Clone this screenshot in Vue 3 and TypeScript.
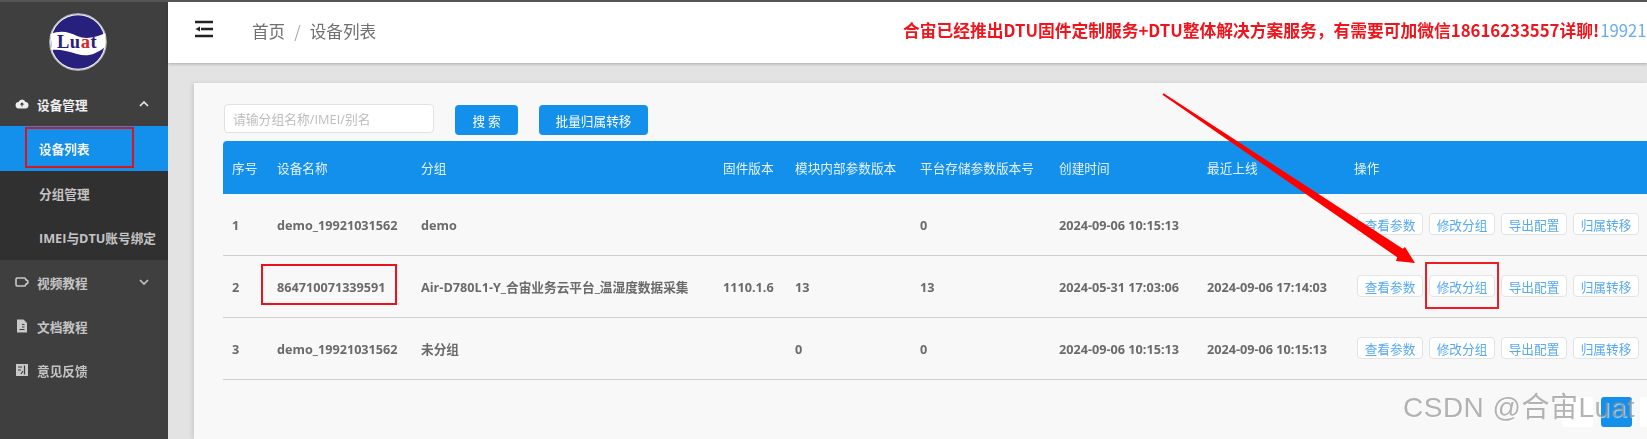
<script setup lang="ts">
interface Row {
  no: number
  name: string
  group: string
  firmware: string
  inner: string
  stored: string
  created: string
  online: string
}

const columns = ['序号', '设备名称', '分组', '固件版本', '模块内部参数版本', '平台存储参数版本号', '创建时间', '最近上线', '操作']
const actions = ['查看参数', '修改分组', '导出配置', '归属转移']

const rows: Row[] = [
  { no: 1, name: 'demo_19921031562', group: 'demo', firmware: '', inner: '', stored: '0', created: '2024-09-06 10:15:13', online: '' },
  { no: 2, name: '864710071339591', group: 'Air-D780L1-Y_合宙业务云平台_温湿度数据采集', firmware: '1110.1.6', inner: '13', stored: '13', created: '2024-05-31 17:03:06', online: '2024-09-06 17:14:03' },
  { no: 3, name: 'demo_19921031562', group: '未分组', firmware: '', inner: '0', stored: '0', created: '2024-09-06 10:15:13', online: '2024-09-06 10:15:13' }
]
</script>

<template>
  <div class="page">
    <aside class="sidebar">
      <div class="logo">
        <svg width="58" height="58" viewBox="0 0 58 58">
          <circle cx="29" cy="29" r="28.2" fill="#fff" stroke="#b9b9c4" stroke-width="1.2" />
          <circle cx="29" cy="29" r="26.8" fill="#27207c" />
          <path d="M1.5 21 C12 17 20 19 28 23 C38 27 47 24 56.5 20 L56 34 C46 42 38 44 28 41 C18 38 10 36 3 37 Z" fill="#fff" />
          <text x="8" y="35" class="logo-text">L<tspan fill="#27207c">u</tspan><tspan fill="#d9252b">a</tspan><tspan fill="#27207c">t</tspan></text>
        </svg>
      </div>
      <nav class="menu">
        <div class="menu-item bright">
          <svg class="icon" viewBox="0 0 14 14"><path d="M4 11.500a3.200 3.200 0 0 1-.4-6.400 3.600 3.600 0 0 1 6.900 0 3.200 3.200 0 0 1-.4 6.400Z" fill="#eee" /><path d="M7 6v3.400M5.500 7.600 7 6l1.500 1.600" stroke="#3d3d3d" stroke-width="1.100" fill="none" /></svg>
          <span>设备管理</span>
          <svg class="caret" viewBox="0 0 10 6"><path d="M1 5l4-4 4 4" fill="none" stroke="#eee" stroke-width="1.600" /></svg>
        </div>
        <div class="submenu">
          <div class="sub-item active"><span class="mark">设备列表</span></div>
          <div class="sub-item">分组管理</div>
          <div class="sub-item">IMEI与DTU账号绑定</div>
        </div>
        <div class="menu-item">
          <svg class="icon" viewBox="0 0 14 14"><path d="M2.200 3h7a1.500 1.500 0 0 1 1.500 1.500L12.800 6v2l-2.100 1.500A1.500 1.500 0 0 1 9.200 11h-7A1.200 1.200 0 0 1 1 9.800V4.200A1.200 1.200 0 0 1 2.200 3Z" fill="none" stroke="#c8c8c8" stroke-width="1.600" /></svg>
          <span>视频教程</span>
          <svg class="caret" viewBox="0 0 10 6"><path d="M1 1l4 4 4-4" fill="none" stroke="#c8c8c8" stroke-width="1.600" /></svg>
        </div>
        <div class="menu-item">
          <svg class="icon" viewBox="0 0 14 14"><path d="M2 .5h6.500l3.500 3.500v9.500H2Z" fill="#c8c8c8" /><path d="M7 5.500h2.500M7 8h2.500M4.500 10.500h5" stroke="#3d3d3d" stroke-width="1.100" /></svg>
          <span>文档教程</span>
        </div>
        <div class="menu-item">
          <svg class="icon" viewBox="0 0 14 14"><rect x="1" y="1" width="12" height="12" fill="#c8c8c8" /><path d="M9.500 2.500v9M3 4h4M3 7h3M6 11l2-3" stroke="#3d3d3d" stroke-width="1.200" /></svg>
          <span>意见反馈</span>
        </div>
      </nav>
    </aside>

    <main class="main">
      <header class="topbar">
        <svg class="fold" viewBox="0 0 20 18"><path d="M1 2h18M7 9h12M1 16h18" stroke="#222" stroke-width="2.400" /><path d="M1.500 9 6 6.500v5Z" fill="#222" /></svg>
        <div class="crumb"><span>首页</span><i>/</i><span>设备列表</span></div>
        <div class="notice">合宙已经推出DTU固件定制服务+DTU整体解决方案服务，有需要可加微信18616233557详聊!<span class="phone">19921</span></div>
      </header>

      <section class="content">
        <div class="card">
          <div class="toolbar">
            <input class="search" type="text" placeholder="请输分组名称/IMEI/别名" />
            <button class="btn">搜 索</button>
            <button class="btn wide">批量归属转移</button>
          </div>
          <table class="grid">
            <colgroup>
              <col class="c1" /><col class="c2" /><col class="c3" /><col class="c4" /><col class="c5" /><col class="c6" /><col class="c7" /><col class="c8" /><col />
            </colgroup>
            <thead>
              <tr><th v-for="col in columns" :key="col">{{ col }}</th></tr>
            </thead>
            <tbody>
              <tr v-for="row in rows" :key="row.no">
                <td>{{ row.no }}</td>
                <td>
                  <span :class="{ 'name-mark': row.no === 2 }">{{ row.name }}</span>
                </td>
                <td>{{ row.group }}</td>
                <td>{{ row.firmware }}</td>
                <td>{{ row.inner }}</td>
                <td>{{ row.stored }}</td>
                <td>{{ row.created }}</td>
                <td>{{ row.online }}</td>
                <td>
                  <div class="actions">
                    <button v-for="action in actions" :key="action" class="act" :class="{ marked: row.no === 2 && action === '修改分组' }">{{ action }}</button>
                  </div>
                </td>
              </tr>
            </tbody>
          </table>
          <div class="pager">
            <span class="pg"></span>
            <span class="pg current"></span>
            <span class="pg"></span>
          </div>
        </div>
      </section>
    </main>

    <!-- annotation drawn over the screenshot -->
    <svg class="arrow" width="1647" height="439" viewBox="0 0 1647 439">
      <path d="M1162.400 94.800 L1163.600 93.200 L1402.800 248.800 L1405 247 L1415 263 L1396 261 L1397.200 257.200 Z" fill="#f00" />
    </svg>
    <div class="watermark">CSDN @合宙Luat</div>
  </div>
</template>

<style>
html,
body {
  margin: 0;
  overflow: hidden;
}
</style>

<style scoped>
.page {
  position: relative;
  display: flex;
  width: 1647px;
  height: 439px;
  overflow: hidden;
  font-family: "Open Sans", "Noto Sans CJK SC", sans-serif;
  border-top: 2px solid #555;
  box-sizing: border-box;
  filter: blur(0.6px);
}

.sidebar {
  width: 168px;
  flex: none;
  background: #3f3f3f;
  color: #c4c4c4;
  font-size: 12.67px;
  font-weight: 700;
}

.logo {
  display: flex;
  justify-content: center;
  padding: 11px 12px 0 0;
  height: 60px;
}

.logo-text {
  font-family: "Liberation Serif", serif;
  font-size: 18.5px;
  font-weight: 700;
  letter-spacing: 0.5px;
  fill: #27207c;
}

.menu {
  margin-top: 9px;
}

.menu-item {
  display: flex;
  align-items: center;
  height: 44px;
  padding: 0 19px 0 15px;
  gap: 8px;
}

.menu-item.bright {
  color: #eee;
}

.icon {
  width: 14px;
  height: 14px;
  flex: none;
}

.caret {
  width: 10px;
  height: 6px;
  margin-left: auto;
}

.submenu {
  background: #303030;
  padding-bottom: 1px;
}

.sub-item {
  height: 44px;
  display: flex;
  align-items: center;
  padding-left: 39px;
}

.sub-item.active {
  height: 45px;
  background: #1390ec;
  color: #f2f2f2;
  position: relative;
}

.mark::after {
  content: "";
  position: absolute;
  left: 25px;
  top: 1px;
  width: 109px;
  height: 41px;
  box-sizing: border-box;
  border: 2px solid #d9161e;
}

.main {
  flex: 1;
  min-width: 0;
  display: flex;
  flex-direction: column;
}

.topbar {
  height: 61px;
  flex: none;
  display: flex;
  align-items: center;
  background: #fff;
  padding-left: 26px;
  box-shadow: 0 1px 3px rgba(0, 0, 0, 0.25);
  position: relative;
  white-space: nowrap;
}

.fold {
  width: 20px;
  height: 18px;
  margin-top: -7px;
  flex: none;
}

.crumb {
  margin-left: 38px;
  font-size: 16.6px;
  color: #707070;
  width: 651px;
  flex: none;
  margin-top: -4px;
  font-family: "Noto Sans CJK SC", sans-serif;
}

.crumb i {
  font-style: normal;
  color: #aaa;
  margin: 0 9px;
}

.notice {
  color: #f0141c;
  font-size: 16.75px;
  font-weight: 700;
  margin-top: -5px;
  flex: none;
  font-family: "Noto Sans CJK SC", sans-serif;
}

.phone {
  color: #6aaef0;
  font-weight: 400;
  margin-left: 1px;
}

.content {
  flex: 1;
  background: #e3e3e3;
  padding: 20px 0 0 26px;
}

.card {
  height: 100%;
  background: #f8f8f8;
  padding: 22px 0 0 29px;
  box-sizing: border-box;
  position: relative;
  box-shadow: -2px 0 4px rgba(0, 0, 0, 0.1);
}

.toolbar {
  display: flex;
  gap: 21px;
  height: 36px;
  align-items: flex-start;
}

.search {
  width: 210px;
  height: 29px;
  box-sizing: border-box;
  border: 1px solid #e2e2e2;
  border-radius: 4px;
  background: #fff;
  padding: 0 8px;
  font-size: 12.8px;
  font-family: "Open Sans", "Noto Sans CJK SC", sans-serif;
  margin: -1px 0 0 1px;
}

.search::placeholder {
  color: #bdbdbd;
}

.btn {
  width: 63px;
  height: 30px;
  border: none;
  border-radius: 4px;
  background: #1390ec;
  color: #fff;
  font-size: 12.67px;
  font-family: "Noto Sans CJK SC", sans-serif;
  padding: 0;
}

.btn.wide {
  width: 109px;
}

.grid {
  border-collapse: collapse;
  table-layout: fixed;
  width: 1424px;
  font-size: 12.67px;
  color: #6a6a6a;
}

.c1 { width: 45px; }
.c2 { width: 144px; }
.c3 { width: 302px; }
.c4 { width: 72px; }
.c5 { width: 125px; }
.c6 { width: 139px; }
.c7 { width: 148px; }
.c8 { width: 147px; }

.grid th {
  height: 53px;
  background: #1390ec;
  color: #e6f3fd;
  font-weight: 400;
  text-align: left;
  padding: 0 0 0 9px;
  font-family: "Noto Sans CJK SC", sans-serif;
  white-space: nowrap;
}

.grid th:first-child {
  border-top-left-radius: 4px;
}

.grid td {
  height: 61px;
  padding: 0 0 0 9px;
  font-weight: 700;
  border-bottom: 1.500px solid #cfcfcf;
  white-space: nowrap;
}

.name-mark {
  position: relative;
}

.name-mark::after {
  content: "";
  position: absolute;
  left: -16px;
  top: -14px;
  width: 136px;
  height: 41px;
  border: 2px solid #e8141c;
  box-sizing: border-box;
}

.actions {
  display: flex;
  gap: 6px;
  padding-left: 3px;
  margin-top: -1px;
}

.act {
  width: 66px;
  height: 22px;
  padding: 0;
  border: 1px solid #e4e4e4;
  border-radius: 4px;
  background: #fff;
  color: #56a9f3;
  font-size: 12.67px;
  font-family: "Noto Sans CJK SC", sans-serif;
  position: relative;
  flex: none;
}

.act.marked::after {
  content: "";
  position: absolute;
  left: -5px;
  top: -14px;
  width: 74px;
  height: 47px;
  border: 2px solid #f01c24;
  box-sizing: border-box;
}

.pager {
  position: absolute;
  left: 1368px;
  top: 314px;
  display: flex;
  gap: 8px;
}

.pg {
  width: 31px;
  height: 30px;
  border-radius: 3px;
  background: #fff;
}

.pg.current {
  background: #1390ec;
}

.arrow {
  position: absolute;
  left: 0;
  top: -2px;
  pointer-events: none;
}

.watermark {
  position: absolute;
  left: 1403px;
  top: 390px;
  font-size: 28px;
  line-height: 32px;
  letter-spacing: 0.5px;
  color: rgba(130, 130, 130, 0.6);
  font-family: "Liberation Sans", "Noto Sans CJK SC", sans-serif;
  white-space: nowrap;
  text-shadow: 1px 1px 1px rgba(255, 255, 255, 0.6);
}
</style>
